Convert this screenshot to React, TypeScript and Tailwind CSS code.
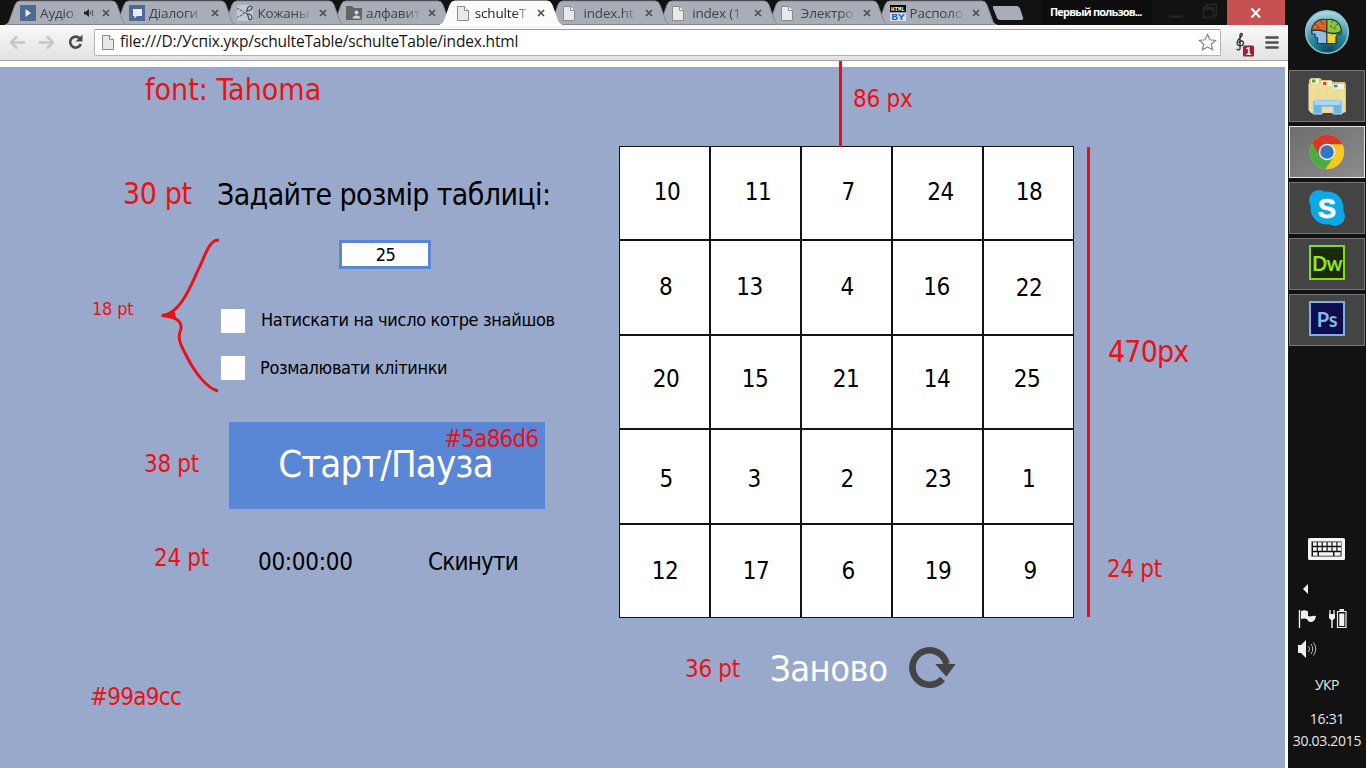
import React from "react";

const ui = "font-['Open_Sans','Noto_Sans',sans-serif]";
const tahoma = "font-['DejaVu_Sans_Condensed','DejaVu_Sans',sans-serif] [font-stretch:condensed]";

const PageIcon = () => (
  <svg width="12" height="15" viewBox="0 0 12 15" className="shrink-0">
    <path d="M.5 .5h7l4 4v10H.5z" fill="#e9e9e9" stroke="#8b8b8b" />
    <path d="M7.500 .5v4h4" fill="#fff" stroke="#8b8b8b" />
  </svg>
);

const PlayIcon = () => (
  <svg width="16" height="16" viewBox="0 0 16 16" className="shrink-0">
    <rect width="16" height="16" fill="#4d6a92" />
    <path d="M5.500 4l5.500 4-5.500 4z" fill="#e8ecf2" />
  </svg>
);

const ChatIcon = () => (
  <svg width="16" height="16" viewBox="0 0 16 16" className="shrink-0">
    <rect width="16" height="16" fill="#4d6a92" />
    <path d="M4 4h9v7H8l-2.500 2.500V11H4z" fill="#e8ecf2" />
  </svg>
);

const ScissorsIcon = () => (
  <svg width="16" height="16" viewBox="0 0 16 16" className="shrink-0">
    <rect width="16" height="16" fill="#c3c9d1" />
    <path d="M0 3l11 6.500M0 12.500l4-2 7-5" stroke="#5b6573" strokeWidth="1.100" strokeDasharray="2.500 .8" fill="none" />
    <path d="M10 6c0-3.500 2-5 4-5s1.500 3.500-1.500 4.500zM10.500 9c3 0 4.500 1.500 4.500 4s-3.500 2.500-3.500-.5z" stroke="#3d4658" strokeWidth="1.200" fill="none" />
  </svg>
);

const FolderUserIcon = () => (
  <svg width="16" height="14" viewBox="0 0 16 14" className="shrink-0">
    <path d="M0 0h6l2 2h8v12H0z" fill="#646464" />
    <circle cx="10.500" cy="6.500" r="2" fill="#d5d8dd" />
    <path d="M6.500 12.500c0-4 8-4 8 0z" fill="#d5d8dd" />
  </svg>
);

const HtmlByIcon = () => (
  <svg width="16" height="16" viewBox="0 0 16 16" className="shrink-0">
    <rect width="16" height="7.500" fill="#000" />
    <rect y="7.500" width="16" height="8.500" fill="#d8dde4" />
    <text x="1" y="6" fontSize="6" fontWeight="700" textLength="14" lengthAdjust="spacingAndGlyphs" fill="#fff" fontFamily="Liberation Mono">HTML</text>
    <text x="1.200" y="14.600" fontSize="9.500" fontWeight="700" textLength="13.500" lengthAdjust="spacingAndGlyphs" fill="#1c68c8" fontFamily="Liberation Mono">BY</text>
  </svg>
);

const SpeakerSmall = () => (
  <svg width="11" height="10" viewBox="0 0 11 10" className="shrink-0">
    <path d="M0 3.500h2L5 1v8L2 6.500H0z" fill="#222" />
    <path d="M6.800 3v4M8.800 2v6" stroke="#555" strokeWidth="1" />
  </svg>
);

type TabInfo = { title: string; icon: React.ReactNode; audio?: boolean; active?: boolean };
const tabs: TabInfo[] = [
  { title: "Аудіо", icon: <PlayIcon />, audio: true },
  { title: "Діалоги", icon: <ChatIcon /> },
  { title: "Кожаны", icon: <ScissorsIcon /> },
  { title: "алфавит", icon: <FolderUserIcon /> },
  { title: "schulteT", icon: <PageIcon />, active: true },
  { title: "index.ht", icon: <PageIcon /> },
  { title: "index (1", icon: <PageIcon /> },
  { title: "Электро", icon: <PageIcon /> },
  { title: "Располо", icon: <HtmlByIcon /> },
];

function Tab({ title, icon, audio, active, z }: TabInfo & { z: number }) {
  return (
    <div className="relative h-[25px] w-[108.7px] shrink-0" style={{ zIndex: active ? 20 : z }}>
      <svg width="124" height="25" viewBox="0 0 124 25" className="absolute left-0 top-0">
        <path
          d="M0 25C3 24 4 22 5 19L10 5Q11.500 1 15 1H107Q110.500 1 112 5L117 19C118 22 119 24 122 25Z"
          fill={active ? "#fbfbfb" : "#a9adb7"}
          stroke={active ? "#fff" : "#868a92"}
          strokeWidth="1"
        />
        {!active && <path d="M3 24.500H119" stroke="#83868c" />}
      </svg>
      <div className="relative flex h-[25px] items-center pl-[15px] pt-px">
        <div className={"flex items-center " + (active ? "w-5 pl-[2px]" : "w-5")}>{icon}</div>
        <div
          className={
            (audio ? "w-[38px]" : "w-[54px]") +
            " overflow-hidden whitespace-nowrap text-[13.5px] leading-[18px] tracking-[-0.15px] [mask-image:linear-gradient(to_right,black_72%,transparent_104%)] " +
            (active ? "text-[#222]" : "text-[#3f4248]")
          }
        >
          {title}
        </div>
        {audio && <div className="ml-[6px] w-[10px]"><SpeakerSmall /></div>}
        <svg width="8" height="8" viewBox="0 0 8 8" className="ml-[8px]">
          <path d="M1 1l6 6M7 1L1 7" stroke="#4c4e52" strokeWidth="1.700" />
        </svg>
      </div>
    </div>
  );
}

function TabStrip() {
  return (
    <div className="relative z-0 flex h-[25px] bg-[#121212]">
      <div className="flex w-[991px] shrink-0 pl-[5px]">
        {tabs.map((t, i) => (
          <Tab key={t.title} {...t} z={10 - i} />
        ))}
      </div>
      <svg width="34" height="25" viewBox="0 0 34 25" className="shrink-0">
        <path d="M3 6h23q2 0 3 2.500l3 9q.5 2.500-1.500 2.500H9q-2 0-3-2L2 8q-.5-2 1-2z" fill="#a9adb7" />
      </svg>
      <div className="ml-[16px] flex h-[24px] w-[111px] shrink-0 justify-start bg-[#0d0d0d] pl-[9px]">
        <span className="whitespace-nowrap text-[11px] font-bold leading-[23px] tracking-[-0.83px] text-white">Первый пользов...</span>
      </div>
      <svg width="75" height="24" viewBox="0 0 75 24" className="shrink-0" fill="none">
        <path d="M17 16.500h14" stroke="#292929" strokeWidth="2" />
        <path d="M51.500 7.500h10v10h-10zM54.500 7V4.500h10v11H62M51 9h10" stroke="#272727" strokeWidth="1.500" />
      </svg>
      <div className="flex h-[25px] w-[58px] items-center justify-center bg-[#c75050]">
        <svg width="12" height="10" viewBox="0 0 12 10">
          <path d="M1.500 .5l8.500 9M10 .5l-8.500 9" stroke="#fff" strokeWidth="2.100" />
        </svg>
      </div>
    </div>
  );
}

function Toolbar() {
  return (
    <div className="flex h-9 items-center border-b border-[#a3a3a3] bg-linear-to-b from-[#f9f9f9] to-[#e2e2e2]">
      <svg width="94" height="35" viewBox="0 0 94 35" fill="none" className="shrink-0">
        <path d="M25 17.500H12M17 11.500l-6 6 6 6" stroke="#c6c6c6" strokeWidth="2.500" />
        <path d="M39 17.500h13M47 11.500l6 6-6 6" stroke="#c6c6c6" strokeWidth="2.500" />
        <path d="M79.800 13.500a5.500 5.500 0 1 0 1 5.500" stroke="#4a4a4a" strokeWidth="2.600" />
        <path d="M82.500 9.500v7h-7z" fill="#4a4a4a" />
      </svg>
      <div className="mb-px flex h-[27px] w-[1127px] shrink-0 items-center rounded-[2px] border border-[#b2b2b2] border-t-[#9c9c9c] bg-white pl-[7px]">
        <PageIcon />
        <span className="ml-[6px] whitespace-nowrap text-[15.5px] tracking-[-0.18px] text-[#151515]">
          file:///D:/Успіх.укр/schulteTable/schulteTable/index.html
        </span>
        <svg width="19" height="19" viewBox="0 0 19 19" className="ml-auto mr-[3px]">
          <path d="M9.500 1.500l2.400 5.300 5.700.6-4.300 3.800 1.300 5.700-5.100-3-5.100 3 1.300-5.700L1.400 7.400l5.700-.6z" fill="#fff" stroke="#858585" strokeWidth="1.200" />
        </svg>
      </div>
      <svg width="67" height="35" viewBox="0 0 67 35" className="shrink-0">
        <path d="M19 24V10.500c0-3 3-2.500 2 0-.7 2-5 4-5 7.500 0 4 7 3.500 6.500 0-.3-3-4.500-2.500-4.500 0M19 23.500c0 2-3 1.800-3 .3" fill="none" stroke="#333" strokeWidth="1.400" />
        <rect x="22" y="20.500" width="11" height="11" rx="1.500" fill="#a41e22" />
        <text x="27.500" y="30" textAnchor="middle" fill="#fff" fontWeight="700" fontSize="10" fontFamily="Liberation Sans">1</text>
        <path d="M45.500 12.500h11M45.500 17.500h11M45.500 22.500h11" stroke="#505050" strokeWidth="2.700" strokeLinecap="round" />
      </svg>
    </div>
  );
}

type Cell = [n: number, dx: number, dy: number];
const cells: Cell[] = [
  [10, 2.5, -1], [11, 2.5, -1], [7, 1.5, -1], [24, 3, -1.5], [18, 0.5, -1],
  [8, 1, -1], [13, -6, -1.5], [4, 0.5, -1], [16, -1, -1], [22, 0.5, 0],
  [20, 1.5, -3], [15, -0.5, -3], [21, -0.5, -3], [14, -0.5, -3], [25, -1.5, -3],
  [5, 1.5, 2], [3, -1.5, 2], [2, 0.5, 2], [23, 0.5, 1.5], [1, 0, 2],
  [12, 0.5, 0], [17, 0.5, 0], [6, 1.5, 0], [19, 0.5, 0], [9, 1.5, 0],
];

function SchulteTable() {
  return (
    <div className="grid w-[455px] grid-cols-5 grid-rows-[94px_95px_94px_95px_94px] bg-white text-[24px] leading-none text-black">
      {cells.map(([n, dx, dy]) => (
        <div key={n} className="flex items-center justify-center border border-[#141414]">
          <span className="tracking-[-0.6px]" style={{ transform: `translate(${dx}px, ${dy}px)` }}>{n}</span>
        </div>
      ))}
    </div>
  );
}

function SettingsForm() {
  return (
    <div className="flex w-[619px] shrink-0 flex-col pt-[113px]">
      <h1 className="ml-[217px] whitespace-nowrap text-[30px] leading-[30px] tracking-[-0.62px]">Задайте розмір таблиці:</h1>
      <div className="ml-[339px] mt-[30px] flex h-[29px] w-[92px] items-center justify-center border-3 border-[#5a86d6] bg-white pt-px pl-px text-[18px] leading-none tracking-[-0.6px]">25</div>
      <div className="ml-[221px] mt-10 flex h-6 items-center">
        <div className="size-6 bg-white" />
        <span className="ml-4 -mt-[3px] whitespace-nowrap text-[18px] leading-none tracking-[-0.33px]">Натискати на число котре знайшов</span>
      </div>
      <div className="ml-[221px] mt-[23px] flex h-6 items-center">
        <div className="size-6 bg-white" />
        <span className="ml-[15px] whitespace-nowrap text-[18px] leading-none tracking-[-0.36px]">Розмалювати клітинки</span>
      </div>
      <button className="ml-[229px] mt-[42px] flex h-[87px] w-[316px] items-center justify-center bg-[#5a86d6] pb-[4px] pr-[3px] text-[38px] leading-none tracking-[-0.85px] text-white">Старт/Пауза</button>
      <div className="ml-[258px] mt-[41px] flex text-[24px] leading-none">
        <span className="w-[170px] tracking-[-0.3px]">00:00:00</span>
        <span className="tracking-[-0.8px]">Скинути</span>
      </div>
    </div>
  );
}

function Notes() {
  const note = "absolute whitespace-nowrap leading-none ";
  return (
    <div className="pointer-events-none text-[#ee0f14]">
      <span className={note + "left-[145px] top-[75px] text-[30px] tracking-[0.03px]"}>font: Tahoma</span>
      <span className={note + "left-[123px] top-[179px] text-[30px] tracking-[-0.4px]"}>30 pt</span>
      <span className={note + "left-[92px] top-[300px] text-[18px] tracking-[-0.2px]"}>18 pt</span>
      <span className={note + "left-[144px] top-[452px] text-[24px] tracking-[-0.35px]"}>38 pt</span>
      <span className={note + "left-[154px] top-[546px] text-[24px] tracking-[-0.35px]"}>24 pt</span>
      <span className={note + "left-[444px] top-[427px] text-[24px] tracking-[-0.8px]"}>#5a86d6</span>
      <span className={note + "left-[90px] top-[685px] text-[24px] tracking-[-0.75px]"}>#99a9cc</span>
      <span className={note + "left-[853px] top-[87px] text-[24px] tracking-[-0.25px]"}>86 px</span>
      <span className={note + "left-[1108px] top-[337px] text-[30px] tracking-[-0.85px]"}>470px</span>
      <span className={note + "left-[1107px] top-[557px] text-[24px] tracking-[-0.35px]"}>24 pt</span>
      <span className={note + "left-[685px] top-[657px] text-[24px] tracking-[-0.35px]"}>36 pt</span>
      <div className="absolute left-[839px] top-[61px] h-[86px] w-[3px] bg-[#e50f18]" />
      <div className="absolute left-[1087px] top-[147px] h-[470px] w-[3px] bg-[#e50f18]" />
      <svg width="64" height="158" viewBox="0 0 64 158" className="absolute left-[158px] top-[237px]" fill="none">
        <path d="M61 3.500C52 1 47 19 41 31C33 48 22 78 4 78.500C17 80 24 83 23 92C19 100 22 107 28 118C36 134 48 151 60 154" stroke="#ea1016" strokeWidth="2.900" />
        <path d="M2 79l15-4 1 6z" fill="#ea1016" />
      </svg>
    </div>
  );
}

const taskBtn = "flex h-[52px] w-[76px] items-center justify-center border ";
const head = "M8 25C6 17 13 9 21 10.500Q22.500 10 24 10.500C32 9 39 17 37 25H34L32 28V34.500H13.500V29L11 28V25Z";

function Taskbar() {
  return (
    <aside className={"flex w-[78px] shrink-0 flex-col items-center bg-[#121212] text-[#e8e8e8] " + ui}>
      <svg width="46" height="46" viewBox="0 0 46 46" className="mt-[9px]">
        <defs>
          <radialGradient id="orb" cx=".55" cy=".95" r=".95">
            <stop offset="0" stopColor="#0b4962" /><stop offset=".5" stopColor="#2b8ba0" /><stop offset="1" stopColor="#b4dfe5" />
          </radialGradient>
          <clipPath id="brain"><path d={head} /></clipPath>
        </defs>
        <circle cx="23" cy="23" r="21.300" fill="url(#orb)" stroke="#8cc3d2" strokeWidth="1.500" />
        <g clipPath="url(#brain)">
          <rect x="6" y="6" width="17" height="18" fill="#e2642a" />
          <rect x="23" y="6" width="17" height="18" fill="#8cc63c" />
          <path d="M6 21q8 0 17 3v12H6z" fill="#8fbfe8" />
          <path d="M23 24q8 3 17 0v12H23z" fill="#f7cf34" />
        </g>
        <path d="M22.800 10v24.500M8 21.500q7-1.500 15 1.500t14-.5" stroke="#21383b" strokeWidth="1.300" fill="none" />
        <path d="M16 11l1.500 3M11 15l3 2M19 13v3M29 11l-1.500 3M34 15l-3 2M27 16v3M13 18.500h3M32 19h-3" stroke="#4c4a2b" strokeWidth=".9" fill="none" />
        <path d={head} fill="none" stroke="#1d3a44" strokeWidth="1.200" />
      </svg>
      <div className="mt-[15px] flex flex-col gap-1">
        <div className={taskBtn + "border-[#777] bg-[#444]"}>
          <svg width="42" height="40" viewBox="0 0 42 40">
            <path d="M3 4l2-2h9l2 2h9l2 2h12l1 3v27l-3 1H6l-3-3z" fill="#dcc57a" />
            <path d="M5 3h8v5H5zM15 5h11v5H15zM27 8h11v5H27z" fill="#f2f0e2" />
            <path d="M6 3.500h3.500v3H6z" fill="#57a148" /><path d="M17 6h3.500v3H17z" fill="#d34b35" /><path d="M28 8.800h3.500v2.500H28z" fill="#3186c9" />
            <path d="M2.500 7.500h13l2 2.500h9l2 3h10.500V35l-2 2H5l-2.500-3z" fill="#f0dd98" />
            <path d="M12 13v12M21 13v12M30 15v10" stroke="#e6cf83" strokeWidth=".7" />
            <path d="M7 26q0-2 2-2h25q2 0 2 2v12h-9v-7H16v7H7z" fill="#6db4e2" stroke="#b9def2" />
            <path d="M8.500 25h26v4h-26z" fill="#a9daf3" />
          </svg>
        </div>
        <div className={taskBtn + "border-[#e8e8e8] bg-linear-to-br from-[#6d6d6d] to-[#8d8d8d]"}>
          <svg width="36" height="36" viewBox="0 0 36 36">
            <circle cx="18" cy="18" r="17.300" fill="#f7c81f" />
            <path d="M3 9.400A17.300 17.300 0 0 1 33.500 10.200H18L10.500 22z" fill="#da352a" />
            <path d="M3 9.400A17.300 17.300 0 0 0 16.500 35.200L25 22 18 26 10.800 22z" fill="#4cab45" />
            <circle cx="18" cy="18" r="8.300" fill="#f1f1ec" /><circle cx="18" cy="18" r="6.800" fill="#3474c4" />
          </svg>
        </div>
        <div className={taskBtn + "border-[#777] bg-[#444]"}>
          <svg width="38" height="38" viewBox="0 0 38 38">
            <circle cx="11" cy="11" r="10" fill="#0ea7e8" /><circle cx="27" cy="27" r="10" fill="#0ea7e8" /><circle cx="19" cy="19" r="16.500" fill="#0ea7e8" />
            <text x="19" y="28.500" textAnchor="middle" fill="#fff" stroke="#fff" strokeWidth=".7" fontSize="27" fontWeight="700" fontFamily="Liberation Sans">S</text>
          </svg>
        </div>
        <div className={taskBtn + "border-[#777] bg-[#444]"}>
          <div className="mt-[-3px] flex h-[35px] w-9 items-center justify-center border-2 border-[#83dc12] bg-[#18290c] font-[Lato,sans-serif] text-[20px] font-bold leading-none tracking-[-0.6px] text-[#94e51c]">Dw</div>
        </div>
        <div className={taskBtn + "border-[#777] bg-[#444]"}>
          <div className="mt-[-3px] flex h-[35px] w-9 items-center justify-center border-2 border-[#78afed] bg-[#110c4b] font-[Lato,sans-serif] text-[20px] font-bold leading-none tracking-[-0.2px] text-[#86b9f1]">Ps</div>
        </div>
      </div>
      <svg width="78" height="150" viewBox="0 0 78 150" className="mt-[174px] shrink-0">
        <rect x="20" y="18" width="37" height="22" rx="1.500" fill="#f4f4f4" />
        <rect x="23.500" y="21.500" width="30" height="15" fill="#141414" />
        <path d="M25 24h28M25 29h28" stroke="#f4f4f4" strokeWidth="3.600" strokeDasharray="3.700 1.200" />
        <path d="M25 34h4.500M31 34h14M46.500 34h6" stroke="#f4f4f4" strokeWidth="3.500" />
        <path d="M20 64v10l-5-5z" fill="#f1f1f1" />
        <path d="M11.500 90v18" stroke="#eee" strokeWidth="1.400" />
        <path d="M13 91q4-1.500 7 .5v4.500l2 .5q3-1 6-.5-1 6-5.500 6-2.500 0-3.500-3-3-1-6 0z" fill="#eee" />
        <path d="M42 90v4M46 90v4" stroke="#eee" strokeWidth="1.300" /><path d="M41 94h6v4l-2 2h-2l-2-2z" fill="#eee" /><path d="M44 99v9" stroke="#eee" strokeWidth="1.500" />
        <path d="M49.500 91.500h8.500v16h-8.500z" fill="none" stroke="#eee" strokeWidth="1.200" /><path d="M51.500 91h4.500v-2h-4.500z" fill="#eee" /><rect x="51.300" y="93.500" width="5" height="12.500" fill="#f4f4f4" />
        <path d="M10 125h3l5-5v18l-5-5h-3z" fill="#eee" />
        <path d="M20.500 126q2 3 0 6M23 124q3.500 5 0 10M25.500 122.500q4.500 6.500 0 13" stroke="#bbb" fill="none" />
      </svg>
      <span className="mt-[6px] text-[14px] leading-[18px] tracking-[-0.5px]">УКР</span>
      <span className="mt-[16px] text-[14px] leading-[18px] tracking-[-0.2px]">16:31</span>
      <span className="mt-1 text-[14px] leading-[18px] tracking-[-0.3px]">30.03.2015</span>
    </aside>
  );
}

export default function App() {
  return (
    <div className="flex h-[768px] w-[1366px] overflow-hidden bg-white">
      <div className="relative flex w-[1288px] shrink-0 flex-col">
        <header className={ui}>
          <TabStrip />
          <Toolbar />
        </header>
        <main className={"mr-[3px] mt-[6px] flex flex-1 bg-[#99a9cc] text-black " + tahoma}>
          <SettingsForm />
          <section className="pt-[79px]">
            <SchulteTable />
            <div className="ml-[151px] mt-[26px] flex items-center">
              <span className="w-[138px] pt-[5px] text-[36px] leading-none tracking-[-0.5px] text-white">Заново</span>
              <svg width="48" height="44" viewBox="0 0 48 44">
                <path d="M34.500 35A17.200 17.200 0 1 1 38.500 20" fill="none" stroke="#444" strokeWidth="6.600" />
                <path d="M27.300 20h20.400L38.300 32.700z" fill="#444" />
              </svg>
            </div>
          </section>
        </main>
        <div className={tahoma}>
          <Notes />
        </div>
      </div>
      <Taskbar />
    </div>
  );
}
